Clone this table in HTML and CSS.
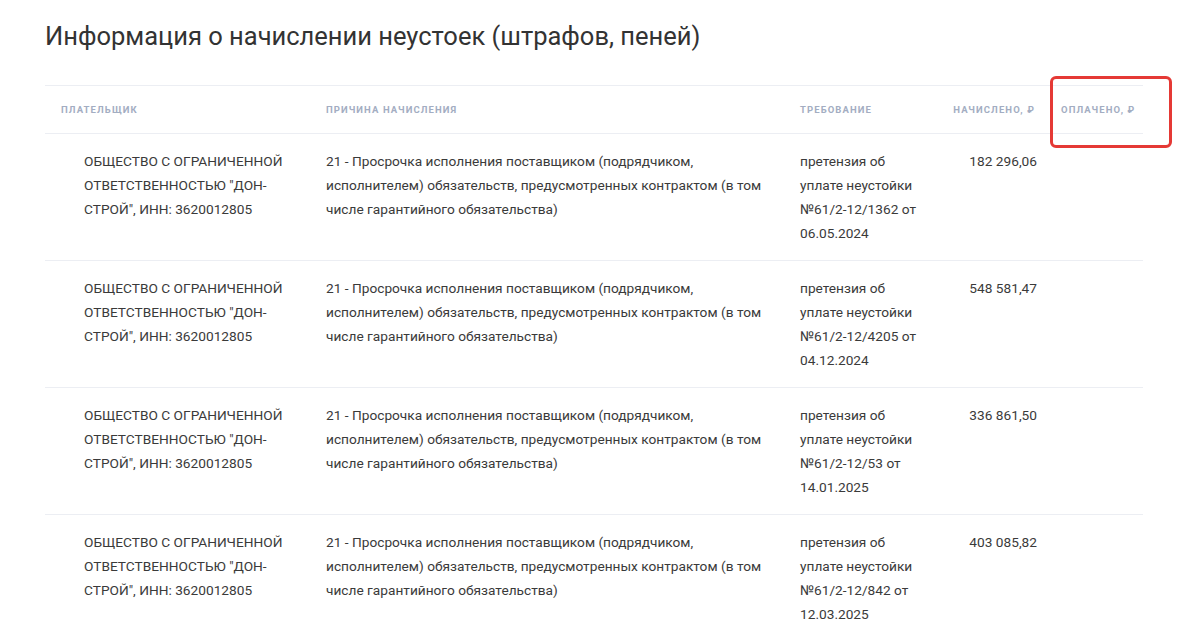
FILE: index.html
```html
<!DOCTYPE html>
<html lang="ru">
<head>
<meta charset="utf-8">
<title>Информация о начислении неустоек</title>
<link rel="stylesheet" href="styles.css">
</head>
<body>
<div class="page">
  <h1 class="title">Информация о начислении неустоек (штрафов, пеней)</h1>
  <div class="table-wrap">
    <table class="penalties">
      <colgroup>
        <col class="c-payer"><col class="c-reason"><col class="c-req"><col class="c-sum"><col class="c-paid">
      </colgroup>
      <thead>
        <tr>
          <th>Плательщик</th>
          <th>Причина начисления</th>
          <th>Требование</th>
          <th class="num">Начислено, ₽</th>
          <th class="paid">Оплачено, ₽</th>
        </tr>
      </thead>
      <tbody>
        <tr>
          <td class="payer">ОБЩЕСТВО С ОГРАНИЧЕННОЙ ОТВЕТСТВЕННОСТЬЮ "ДОН-СТРОЙ", ИНН: 3620012805</td>
          <td>21 - Просрочка исполнения поставщиком (подрядчиком, исполнителем) обязательств, предусмотренных контрактом (в том числе гарантийного обязательства)</td>
          <td>претензия об уплате неустойки №61/2-12/1362 от 06.05.2024</td>
          <td class="num">182 296,06</td>
          <td class="paid"></td>
        </tr>
        <tr>
          <td class="payer">ОБЩЕСТВО С ОГРАНИЧЕННОЙ ОТВЕТСТВЕННОСТЬЮ "ДОН-СТРОЙ", ИНН: 3620012805</td>
          <td>21 - Просрочка исполнения поставщиком (подрядчиком, исполнителем) обязательств, предусмотренных контрактом (в том числе гарантийного обязательства)</td>
          <td>претензия об уплате неустойки №61/2-12/4205 от 04.12.2024</td>
          <td class="num">548 581,47</td>
          <td class="paid"></td>
        </tr>
        <tr>
          <td class="payer">ОБЩЕСТВО С ОГРАНИЧЕННОЙ ОТВЕТСТВЕННОСТЬЮ "ДОН-СТРОЙ", ИНН: 3620012805</td>
          <td>21 - Просрочка исполнения поставщиком (подрядчиком, исполнителем) обязательств, предусмотренных контрактом (в том числе гарантийного обязательства)</td>
          <td>претензия об уплате неустойки №61/2-12/53 от 14.01.2025</td>
          <td class="num">336 861,50</td>
          <td class="paid"></td>
        </tr>
        <tr>
          <td class="payer">ОБЩЕСТВО С ОГРАНИЧЕННОЙ ОТВЕТСТВЕННОСТЬЮ "ДОН-СТРОЙ", ИНН: 3620012805</td>
          <td>21 - Просрочка исполнения поставщиком (подрядчиком, исполнителем) обязательств, предусмотренных контрактом (в том числе гарантийного обязательства)</td>
          <td>претензия об уплате неустойки №61/2-12/842 от 12.03.2025</td>
          <td class="num">403 085,82</td>
          <td class="paid"></td>
        </tr>
      </tbody>
    </table>
    <div class="highlight"></div>
  </div>
</div>
</body>
</html>
```

FILE: styles.css
```css
html, body {
  margin: 0;
  padding: 0;
  background: #ffffff;
  overflow: hidden;
}
body {
  font-family: Roboto, "Liberation Sans", sans-serif;
  color: #333333;
}
.page {
  padding: 18px 57px 0 45px;
}
.title {
  margin: 0 0 31px 0;
  font-size: 25.5px;
  font-weight: 400;
  line-height: 36px;
  color: #333333;
}
.table-wrap {
  position: relative;
}
.penalties {
  width: 1098px;
  border-collapse: collapse;
  table-layout: fixed;
}
.c-payer { width: 265px; }
.c-reason { width: 474px; }
.c-req { width: 152px; }
.c-sum { width: 109px; }
.c-paid { width: 98px; }
.penalties th {
  height: 47px;
  padding: 0 16px;
  text-align: left;
  font-size: 9.5px;
  font-weight: 700;
  letter-spacing: 1.1px;
  text-transform: uppercase;
  color: #a3adc2;
  border-top: 1px solid #eceef3;
  border-bottom: 1px solid #eceef3;
  vertical-align: middle;
  white-space: nowrap;
}
.penalties th.paid {
  padding-right: 0;
}
.penalties td {
  padding: 15px 16px 15px 16px;
  font-size: 13.7px;
  line-height: 24px;
  color: #3a3a3a;
  vertical-align: top;
  border-bottom: 1px solid #eceef3;
}
.penalties td.payer {
  padding-left: 39px;
}
.penalties .num {
  text-align: right;
  padding-right: 8px;
}
.penalties th.num {
  padding-right: 10px;
}
.highlight {
  position: absolute;
  left: 1005px;
  top: -9px;
  width: 116px;
  height: 66px;
  border: 3px solid #e53935;
  border-radius: 6px;
}
```
